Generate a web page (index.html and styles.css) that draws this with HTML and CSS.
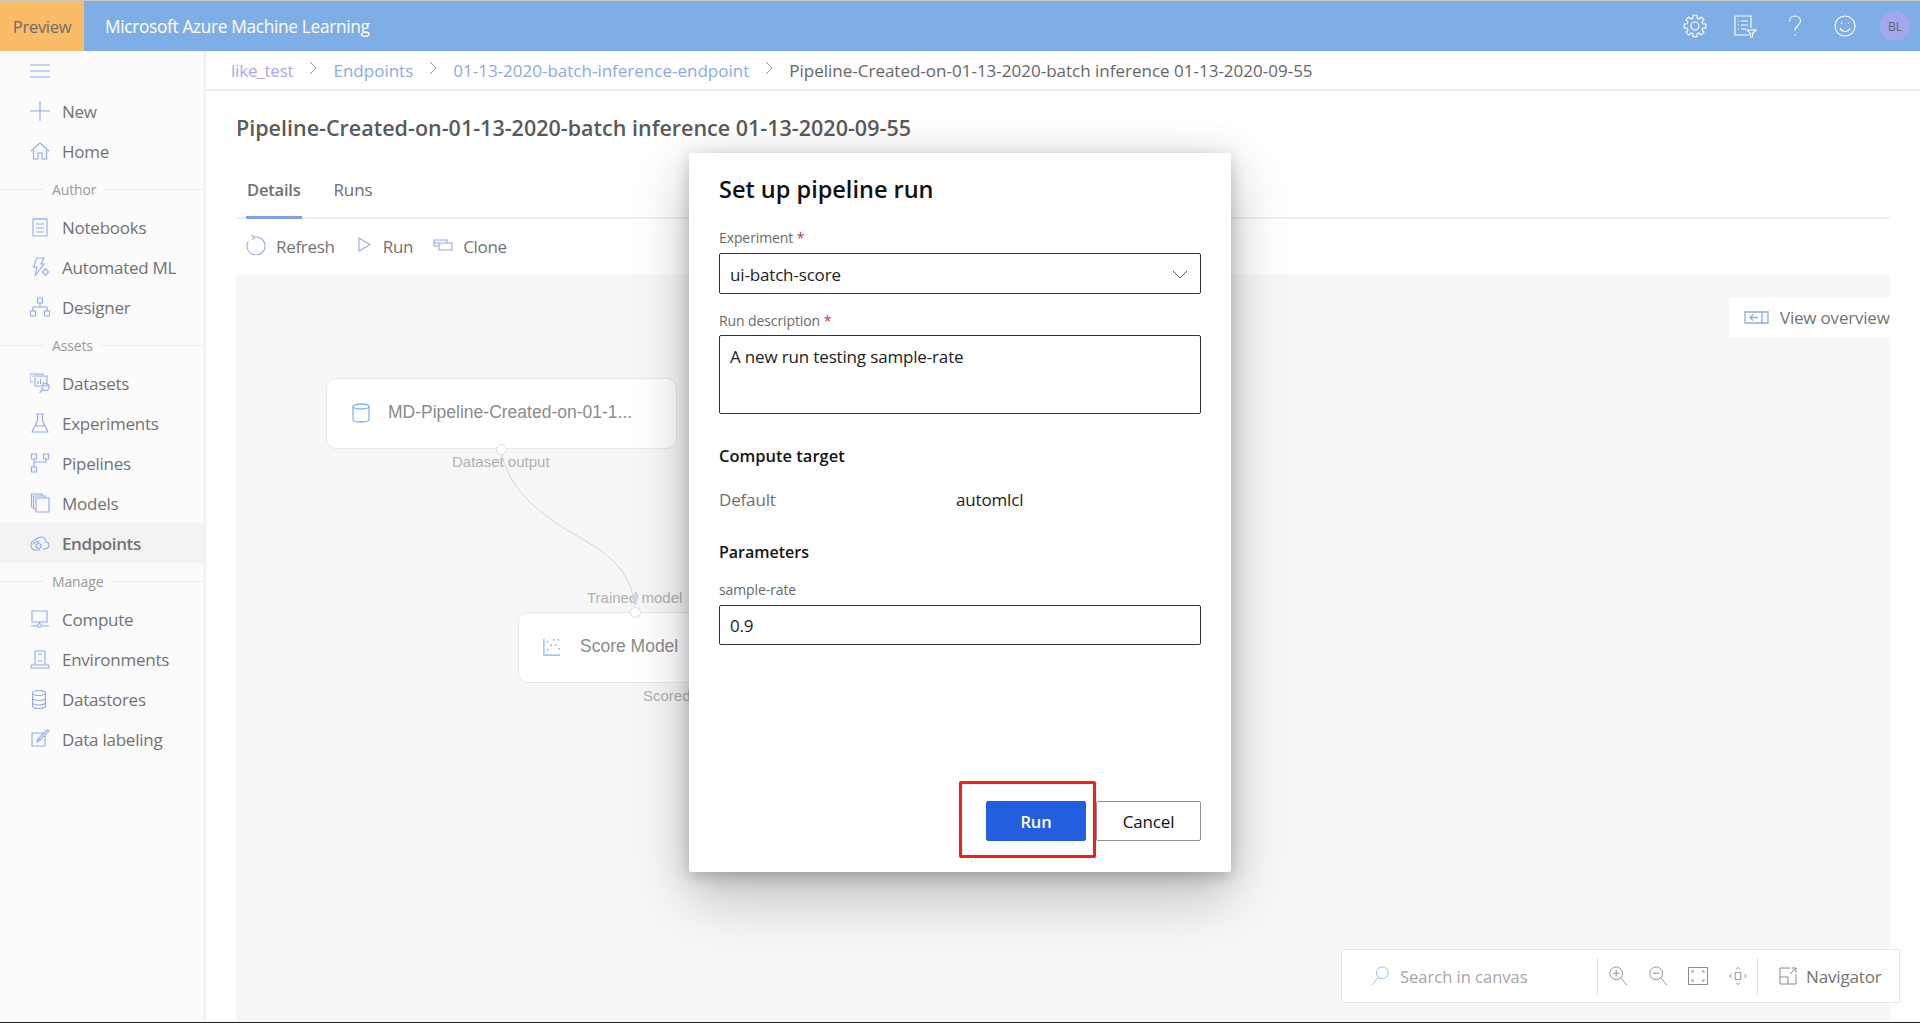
FILE: index.html
```html
<!DOCTYPE html>
<html lang="en">
<head>
<meta charset="utf-8">
<title>Microsoft Azure Machine Learning</title>
<link rel="stylesheet" href="styles.css">
</head>
<body>
<div class="page">
  <header class="topbar">
    <div class="preview">Preview</div>
    <div class="brand">Microsoft Azure Machine Learning</div>
    <div class="top-icons">
      <svg class="ti" viewBox="0 0 24 24"><path d="M9.800 4.300L10.100 1.200H13.900L14.200 4.300L15.900 5L18.300 3L21 5.700L19 8.100L19.700 9.800L22.800 10.100V13.900L19.700 14.200L19 15.900L21 18.300L18.300 21L15.900 19L14.200 19.700L13.900 22.800H10.100L9.800 19.700L8.100 19L5.700 21L3 18.300L5 15.900L4.300 14.200L1.200 13.900V10.100L4.300 9.800L5 8.100L3 5.700L5.700 3L8.100 5z"/><circle cx="12" cy="12" r="4"/></svg>
      <svg class="ti" viewBox="0 0 24 24"><path d="M16 21H2V2h16v12M5 7h1m2 0h7M5 11h1m2 0h7M5 15h1m2 0h5"/><path d="M14 16h9l-3.500 3.500V23h-2v-3.500z"/></svg>
      <svg class="ti" viewBox="0 0 24 24"><path d="M6.500 7.500C6.500 4 9 2 12 2s5.500 2 5.500 5c0 4.500-5.500 4.500-5.500 9.500M12 20.500v1.500"/></svg>
      <svg class="ti" viewBox="0 0 24 24"><circle cx="12" cy="12" r="10"/><path d="M7 14c1 2.500 3 3.500 5 3.500s4-1 5-3.500M8.500 8.500v1.500M15.500 8.500v1.500"/></svg>
      <div class="avatar">BL</div>
    </div>
  </header>

  <div class="body">
    <nav class="sidebar">
      <div class="menu"><svg class="si" viewBox="0 0 20 20"><path d="M0 4h20M0 10h20M0 16h20"/></svg></div>
      <a class="item"><svg class="si" viewBox="0 0 20 20"><path d="M0 10h20M10 0v20"/></svg><span>New</span></a>
      <a class="item"><svg class="si" viewBox="0 0 20 20"><path d="M1 10l9-8 9 8M3.500 9v9h4.500v-6h4v6h4.500V9"/></svg><span>Home</span></a>
      <div class="section"><span>Author</span></div>
      <a class="item"><svg class="si" viewBox="0 0 20 20"><path d="M3 2h14v17H3zM6 7h8M6 11h8M6 15h8M6 1v2M10 1v2M14 1v2"/></svg><span>Notebooks</span></a>
      <a class="item"><svg class="si" viewBox="0 0 20 20"><path d="M7 1h7l-3 6h3L5 19l2-9H3.500z"/><circle cx="15.500" cy="15" r="2.500"/><path d="M15.500 11v1.500M15.500 17.500V19M11.500 15H13M18 15h1.500"/></svg><span>Automated ML</span></a>
      <a class="item"><svg class="si" viewBox="0 0 20 20"><path d="M7.500 1h5v5h-5zM.5 14h5v5h-5zM14.500 14h5v5h-5zM10 6v4M3 14v-4h14v4"/></svg><span>Designer</span></a>
      <div class="section"><span>Assets</span></div>
      <a class="item"><svg class="si" viewBox="0 0 20 20"><path d="M3 9H0V1h13v1M3 3h14v10h-4M5 5v8h6M8 11V8M10.500 11V6M13 11V9"/><circle cx="15.500" cy="14" r="3.500"/><path d="M13 16.500L9.500 20"/></svg><span>Datasets</span></a>
      <a class="item"><svg class="si" viewBox="0 0 20 20"><path d="M6 1h8M7.500 1v7L2 19h16L12.500 8V1M5 13h10"/></svg><span>Experiments</span></a>
      <a class="item"><svg class="si" viewBox="0 0 20 20"><path d="M1.500 1h5v5h-5zM13.500 1h5v5h-5zM1.500 14h5v5h-5zM4 6v8M16 6v3H4"/></svg><span>Pipelines</span></a>
      <a class="item"><svg class="si" viewBox="0 0 20 20"><path d="M6 19h13V5H6zM6 16H3.500V3H15v2M3.500 14H1.500V1H12v2"/></svg><span>Models</span></a>
      <a class="item active"><svg class="si" viewBox="0 0 20 20"><path d="M13 16c3 0 6-1 6-4 0-2-2-3-3-3 0-3-2-5-5-5-2 0-4 1-5 3-3 0-5 2-5 5 0 3 2 5 5 5h4"/><path d="M3 11.500C4 9 7 8 9.500 9"/><circle cx="8.500" cy="13" r="2.500"/></svg><span>Endpoints</span></a>
      <div class="section"><span>Manage</span></div>
      <a class="item"><svg class="si" viewBox="0 0 20 20"><path d="M2 2h15v11H2zM1 17h7M12 17h7M9.500 13v2"/><circle cx="9.500" cy="16.500" r="1.800"/></svg><span>Compute</span></a>
      <a class="item"><svg class="si" viewBox="0 0 20 20"><path d="M5 2h10v14H5zM8 5h4M8 12h4M5 16l-3.500 0L1 19h18l-.5-3H15"/></svg><span>Environments</span></a>
      <a class="item"><svg class="si" viewBox="0 0 20 20"><ellipse cx="9" cy="4" rx="6.500" ry="2.500"/><path d="M2.500 4v13c0 1.500 3 2.500 6.500 2.500s6.500-1 6.500-2.500V4M2.500 9c0 1.500 3 2.500 6.500 2.500s6.500-1 6.500-2.500M2.500 13.500c0 1.500 3 2.500 6.500 2.500s6.500-1 6.500-2.500"/></svg><span>Datastores</span></a>
      <a class="item"><svg class="si" viewBox="0 0 20 20"><path d="M15 5v12H2V4h12M7 13l1-3 9-9 2 1-9 9zM8 10l2 1"/></svg><span>Data labeling</span></a>
    </nav>

    <main class="main">
      <div class="crumbs">
        <a class="crumb visited">like_test</a>
        <svg class="chev" viewBox="0 0 8 14"><path d="M1 1l6 6-6 6"/></svg>
        <a class="crumb">Endpoints</a>
        <svg class="chev" viewBox="0 0 8 14"><path d="M1 1l6 6-6 6"/></svg>
        <a class="crumb">01-13-2020-batch-inference-endpoint</a>
        <svg class="chev" viewBox="0 0 8 14"><path d="M1 1l6 6-6 6"/></svg>
        <span class="crumb current">Pipeline-Created-on-01-13-2020-batch inference 01-13-2020-09-55</span>
      </div>
      <div class="content">
        <h1 class="title">Pipeline-Created-on-01-13-2020-batch inference 01-13-2020-09-55</h1>
        <div class="tabs">
          <div class="tab selected">Details</div>
          <div class="tab">Runs</div>
        </div>
        <div class="toolbar">
          <a class="tool"><svg class="ci refresh" viewBox="0 0 20 20"><path d="M2.200 6.500A9 9 0 1 0 8 2.200M5.500 0l3 2.300-2.500 2.700"/></svg>Refresh</a>
          <a class="tool run"><svg class="ci play" viewBox="0 0 13 15"><path d="M1 1l11 6.500L1 14z"/></svg>Run</a>
          <a class="tool"><svg class="ci clone" viewBox="0 0 20 12"><path d="M1 1h13v3H1zM1 1v6h5M6 4h13v7H6z"/></svg>Clone</a>
        </div>
        <div class="canvas">
          <div class="overview"><svg class="ov" viewBox="0 0 25 13"><path d="M1 1h23v11H1zM18 1v11M6 6.500h8M9 3.500l-3 3 3 3"/></svg>View overview</div>
          <div class="node node-a"><svg class="ni" viewBox="0 0 18 20"><ellipse cx="9" cy="3.500" rx="8" ry="2.500"/><path d="M1 3.500v13C1 18 4 19 9 19s8-1 8-2.500v-13"/></svg>MD-Pipeline-Created-on-01-1...</div>
          <div class="port port-a"></div>
          <div class="nlabel l-a">Dataset output</div>
          <svg class="edge" viewBox="0 0 150 170"><path class="wire" d="M4 4C9 42 42 68 70 85S130 115 138 158"/><path class="arrow" d="M134 150h8l-4 12z"/></svg>
          <div class="nlabel l-b">Trained model</div>
          <div class="node node-b"><svg class="ni" viewBox="0 0 20 20"><path class="axis" d="M1 1v18h18"/><path class="dots" d="M5 4h.1M12 2h.1M17 2h.1M9 8h.1M14 8h.1M5 13h.1M18 12h.1"/></svg>Score Model</div>
          <div class="port port-b"></div>
          <div class="nlabel l-c">Scored dataset</div>
        </div>
        <div class="canvasbar">
          <svg class="cb search" viewBox="0 0 20 22"><circle cx="12.500" cy="7.500" r="6.500"/><path d="M8 12.500L1 21"/></svg>
          <span class="placeholder">Search in canvas</span>
          <span class="sep"></span>
          <svg class="cb" viewBox="0 0 20 22"><circle cx="8" cy="8" r="7"/><path d="M8 4.500v7M4.500 8h7M13 13l7 8"/></svg>
          <svg class="cb" viewBox="0 0 20 22"><circle cx="8" cy="8" r="7"/><path d="M4.500 8h7M13 13l7 8"/></svg>
          <svg class="cb" viewBox="0 0 20 18"><path d="M.5.500h19v17H.5zM4 6V4h2M14 4h2v2M4 12v2h2M16 12v2h-2"/></svg>
          <svg class="cb" viewBox="0 0 20 22"><path d="M7 7h6v8H7zM8 3.500l2-2 2 2M8 18.500l2 2 2-2M3 8.500L1 11l2 2.500M17 8.500l2 2.500-2 2.500"/></svg>
          <span class="sep second"></span>
          <svg class="cb nav" viewBox="0 0 18 18"><path d="M11 1H1v16h16V7M1 10h8v7M11 7l6-6M12.500 1H17v4.500"/></svg>
          <span class="navtext">Navigator</span>
        </div>
      </div>
    </main>
  </div>
  <div class="bottomline"></div>

  <section class="dialog">
    <h2 class="d-title">Set up pipeline run</h2>
    <label class="lbl first">Experiment <em>*</em></label>
    <div class="field select">ui-batch-score<svg class="caret" viewBox="0 0 16 9"><path d="M1 1l7 7 7-7"/></svg></div>
    <label class="lbl second-lbl">Run description <em>*</em></label>
    <div class="field area">A new run testing sample-rate</div>
    <h3 class="sub compute">Compute target</h3>
    <div class="kv"><span class="k">Default</span><span class="v">automlcl</span></div>
    <h3 class="sub params">Parameters</h3>
    <label class="lbl sample">sample-rate</label>
    <div class="field">0.9</div>
    <div class="actions">
      <button class="btn primary">Run</button>
      <button class="btn">Cancel</button>
    </div>
    <div class="highlight"></div>
  </section>
</div>
</body>
</html>
```
FILE: styles.css
```css
* { box-sizing: border-box; }
html, body { margin: 0; height: 100%; overflow: hidden; }
body { font-family: "Open Sans", "Noto Sans", sans-serif; font-size: 17px; color: #666; background: #fff; }
svg { fill: none; flex: none; }
.page { position: relative; width: 1920px; height: 1023px; display: flex; flex-direction: column; overflow: hidden; }

.topbar { height: 51px; flex: none; display: flex; align-items: center; background: #7faee6; border-top: 1px solid #c8c8c8; }
.preview { width: 84px; height: 100%; background: #fbbb67; color: #6c6c6c; display: flex; align-items: center; justify-content: center; font-size: 16.500px; letter-spacing: -.3px; }
.brand { margin-left: 21px; color: #fff; font-size: 17.300px; letter-spacing: -.33px; }
.top-icons { margin-left: auto; margin-right: 10px; display: flex; align-items: center; gap: 26px; }
.ti { width: 24px; height: 24px; stroke: #fff; stroke-width: 1.100; }
.avatar { width: 30px; height: 30px; border-radius: 50%; background: #a3a8ee; color: #666; font-size: 12px; display: flex; align-items: center; justify-content: center; margin-left: -3px; }

.body { flex: 1; min-height: 0; display: flex; }
.sidebar { width: 206px; flex: none; background: #fbfbfb; border-right: 2px solid #f0f0f0; }
.menu { height: 40px; padding-left: 30px; display: flex; align-items: center; }
.si { width: 20px; height: 20px; stroke: #92aaee; stroke-width: 1.100; }
.item { height: 40px; display: flex; align-items: center; gap: 12px; padding-left: 30px; color: #727272; font-size: 17px; letter-spacing: -.25px; }
.item span { padding-top: 1px; }
.item.active { background: #f3f3f3; font-weight: 600; border-radius: 0 3px 3px 0; width: 204px; letter-spacing: -.4px; }
.section { height: 36px; display: flex; align-items: center; color: #999; font-size: 14px; letter-spacing: -.14px; width: 204px; }
.section span { padding-top: 1px; }
.section::before { content: ""; width: 44px; height: 1px; background: #ebebeb; margin-right: 8px; }
.section::after { content: ""; flex: 1; height: 1px; background: #ebebeb; margin-left: 8px; }

.main { flex: 1; min-width: 0; display: flex; flex-direction: column; }
.crumbs { height: 40px; flex: none; display: flex; align-items: center; padding-left: 25px; border-bottom: 2px solid #ececec; gap: 16px; font-size: 17px; }
.crumb { color: #8ca8ea; white-space: nowrap; }
.crumb.visited { color: #aaa7ec; letter-spacing: -.2px; }
.crumb.current { color: #666; }
.chev { width: 8px; height: 14px; stroke: #999; stroke-width: 1; margin-top: -5px; }

.content { position: relative; flex: 1; min-height: 0; display: flex; flex-direction: column; padding-left: 30px; padding-right: 30px; }
.title { margin: 22px 0 0; height: 30px; line-height: 30px; font-size: 21.500px; font-weight: 600; color: #5a5a5a; white-space: nowrap; }
.tabs { margin-top: 26px; height: 50px; display: flex; gap: 32px; padding-left: 10px; border-bottom: 2px solid #efefef; flex: none; }
.tab { height: 48px; line-height: 24px; padding-top: 9px; color: #6f6f6f; letter-spacing: -.16px; }
.tab.selected { font-weight: 600; border-bottom: 3px solid #7f9fe8; padding-left: 1px; padding-right: 1px; font-size: 16.500px; letter-spacing: -.2px; height: 50px; }
.toolbar { height: 55px; display: flex; align-items: center; padding-left: 10px; gap: 23px; flex: none; color: #737373; letter-spacing: -.3px; }
.tool { display: flex; align-items: center; gap: 10px; }
.tool.run { gap: 12px; }
.ci { stroke: #9aa6ef; stroke-width: 1.100; }
.refresh { width: 20px; height: 20px; margin-top: -4px; }
.play { width: 13px; height: 15px; margin-top: -4px; }
.clone { width: 20px; height: 12px; margin-top: -4px; margin-left: -3px; }

.canvas { position: relative; flex: 1; background: #f7f7f7; overflow: hidden; font-family: "Liberation Sans", Arial, sans-serif; }
.overview { position: absolute; right: 0; top: 23px; width: 161px; height: 40px; background: #fff; display: flex; align-items: center; padding-left: 15px; gap: 11px; color: #737373; font-family: "Open Sans", sans-serif; font-size: 17px; letter-spacing: -.2px; white-space: nowrap; }
.ov { width: 25px; height: 13px; stroke: #8ea9ee; stroke-width: 1.300; }
.node { position: absolute; height: 71px; background: #fff; border: 1px solid #e7e7e7; border-radius: 10px; display: flex; align-items: center; color: #8b8b8b; font-size: 17.500px; padding-bottom: 2px; }
.node-a { left: 90px; top: 104px; width: 351px; padding-left: 25px; gap: 18px; }
.node-b { left: 282px; top: 338px; width: 300px; padding-left: 24px; gap: 19px; }
.ni { width: 18px; height: 20px; stroke: #86b4ee; stroke-width: 1.300; }
.axis { stroke: #86b4ee; }
.dots { stroke: #86b4ee; stroke-width: 2; stroke-linecap: round; }
.port { position: absolute; width: 11px; height: 11px; border-radius: 50%; background: #fff; border: 1px solid #ddd; z-index: 2; }
.port-a { left: 260px; top: 170px; }
.port-b { left: 394px; top: 333px; }
.nlabel { position: absolute; color: #b1b1b1; font-size: 15px; white-space: nowrap; }
.l-a { left: 216px; top: 179px; }
.l-b { left: 351px; top: 315px; }
.l-c { left: 407px; top: 413px; }
.edge { position: absolute; left: 261px; top: 171px; width: 150px; height: 170px; z-index: 1; }
.wire { stroke: #ced6e2; stroke-width: 1; }
.arrow { fill: #ced6e2; }

.canvasbar { position: absolute; left: 1135px; top: 858px; width: 559px; height: 54px; background: #fff; border: 1px solid #e6e6e6; border-radius: 2px; display: flex; align-items: center; padding-left: 28px; color: #a5a5a5; font-size: 16.500px; }
.cb { width: 20px; height: 20px; stroke: #8a8a8a; stroke-width: 1; margin-right: 20px; }
.cb:last-of-type { margin-right: 0; }
.cb.search { stroke: #8db7ee; margin-right: 10px; }
.cb.nav { width: 18px; height: 18px; margin-right: 9px; }
.placeholder { width: 197px; white-space: nowrap; }
.sep { width: 1px; height: 37px; background: #e3e3e3; margin-right: 10px; }
.sep.second { margin-left: -11px; margin-right: 21px; }
.navtext { color: #737373; white-space: nowrap; font-size: 17px; letter-spacing: -.16px; }

.bottomline { height: 1px; flex: none; background: #222; }

.dialog { position: absolute; left: 689px; top: 153px; width: 542px; height: 719px; background: #fff; border-radius: 2px; padding: 20px 30px 31px; display: flex; flex-direction: column; box-shadow: 0 25.600px 57.600px rgba(0,0,0,.22), 0 4.800px 14.400px rgba(0,0,0,.18), 0 0 40px rgba(0,0,0,.08); color: #111; }
.d-title { margin: 0; height: 32px; line-height: 32px; font-size: 23.500px; font-weight: 600; color: #111; }
.lbl { display: block; height: 20px; line-height: 22px; font-size: 14px; letter-spacing: -.1px; color: #6a6a6a; }
.lbl em { color: #c2393b; font-style: normal; }
.first { margin-top: 22px; }
.second-lbl { margin-top: 16px; }
.sample { margin-top: 15px; }
.field { height: 40px; margin-top: 6px; flex: none; border: 1px solid #333; border-radius: 2px; padding: 1px 10px 0; display: flex; align-items: center; font-size: 17px; letter-spacing: -.16px; color: #222; }
.select { justify-content: space-between; height: 41px; }
.caret { width: 16px; height: 9px; stroke: #555; stroke-width: 1; margin-right: 2px; }
.area { height: 79px; margin-top: 5px; align-items: flex-start; padding-top: 9px; }
.sub { margin: 0; height: 24px; line-height: 24px; font-size: 16.500px; font-weight: 600; color: #151515; }
.compute { margin-top: 30px; }
.params { margin-top: 29px; font-size: 16px; }
.kv { display: flex; height: 24px; line-height: 26px; margin-top: 19px; letter-spacing: -.16px; }
.k { width: 237px; color: #707070; }
.v { color: #222; }
.actions { margin-top: auto; display: flex; justify-content: flex-end; gap: 10px; }
.btn { height: 40px; width: 105px; border: 1px solid #8f8f8f; border-radius: 2px; background: #fff; color: #111; font: 400 17px "Open Sans", sans-serif; letter-spacing: -.16px; padding: 0; }
.primary { width: 100px; background: #245ee0; border-color: #245ee0; color: #fff; font-weight: 600; font-size: 16.500px; }
.highlight { position: absolute; left: 270px; top: 628px; width: 137px; height: 77px; border: 3px solid #fd1c12; border-radius: 2px; }
```
